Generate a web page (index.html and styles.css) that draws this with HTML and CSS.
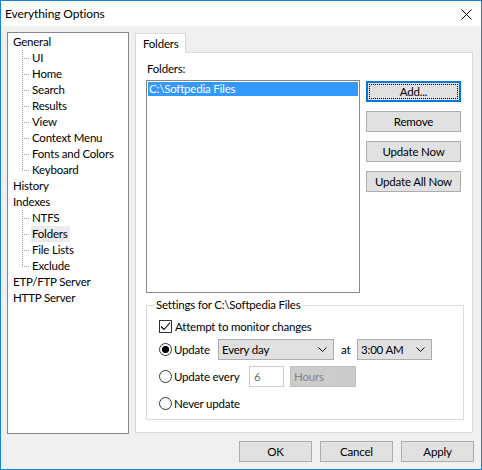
FILE: index.html
```html
<!DOCTYPE html>
<html>
<head>
<meta charset="utf-8">
<title>Everything Options</title>
<link rel="stylesheet" href="styles.css">
</head>
<body>
<div class="window">
  <div class="titlebar">
    <span class="title">Everything Options</span>
    <svg class="close" width="11" height="11" viewBox="0 0 11 11"><path d="M0.5 0.5 L10.5 10.5 M10.5 0.5 L0.5 10.5" stroke="#000" stroke-width="1" fill="none"/></svg>
  </div>
  <div class="client">
    <div class="main">
      <ul class="tree">
        <li class="node">General</li>
        <li class="node child">UI</li>
        <li class="node child">Home</li>
        <li class="node child">Search</li>
        <li class="node child">Results</li>
        <li class="node child">View</li>
        <li class="node child">Context Menu</li>
        <li class="node child">Fonts and Colors</li>
        <li class="node child last">Keyboard</li>
        <li class="node">History</li>
        <li class="node">Indexes</li>
        <li class="node child">NTFS</li>
        <li class="node child"><span class="selected">Folders</span></li>
        <li class="node child">File Lists</li>
        <li class="node child last">Exclude</li>
        <li class="node">ETP/FTP Server</li>
        <li class="node">HTTP Server</li>
      </ul>
      <div class="tabs">
        <div class="tabstrip"><div class="tab">Folders</div></div>
        <div class="panel">
          <div class="label">Folders:</div>
          <div class="listrow">
            <div class="listbox"><div class="item sel">C:\Softpedia Files</div></div>
            <div class="btncol">
              <div class="btn default">Add...</div>
              <div class="btn">Remove</div>
              <div class="btn">Update Now</div>
              <div class="btn">Update All Now</div>
            </div>
          </div>
          <fieldset class="group">
            <legend>Settings for C:\Softpedia Files</legend>
            <div class="groupbody">
              <div class="row r1">
                <span class="check"><svg width="11" height="11" viewBox="0 0 11 11"><path d="M1 5.5 L4 8.5 L10 1.5" stroke="#000" stroke-width="1.1" fill="none"/></svg></span>
                <span class="ctext">Attempt to monitor changes</span>
              </div>
              <div class="row r2">
                <span class="opt w-update"><span class="radio on"></span><span class="rtext">Update</span></span>
                <span class="combo c-freq"><span class="ctext2">Every day</span><svg class="chev" width="9" height="5" viewBox="0 0 9 5"><path d="M0.5 0.5 L4.5 4.5 L8.5 0.5" stroke="#000" fill="none"/></svg></span>
                <span class="at">at</span>
                <span class="combo c-time"><span class="ctext2">3:00 AM</span><svg class="chev" width="9" height="5" viewBox="0 0 9 5"><path d="M0.5 0.5 L4.5 4.5 L8.5 0.5" stroke="#000" fill="none"/></svg></span>
              </div>
              <div class="row r3">
                <span class="opt w-every"><span class="radio"></span><span class="rtext">Update every</span></span>
                <span class="edit">6</span>
                <span class="combo disabled c-hours"><span class="ctext2">Hours</span><svg class="chev" width="9" height="5" viewBox="0 0 9 5"><path d="M0.5 0.5 L4.5 4.5 L8.5 0.5" stroke="#bfbfbf" fill="none"/></svg></span>
              </div>
              <div class="row r4">
                <span class="opt"><span class="radio"></span><span class="rtext">Never update</span></span>
              </div>
            </div>
          </fieldset>
        </div>
      </div>
    </div>
    <div class="footer">
      <div class="btn fbtn">OK</div>
      <div class="btn fbtn">Cancel</div>
      <div class="btn fbtn">Apply</div>
    </div>
  </div>
</div>
</body>
</html>
```
FILE: styles.css
```css
html, body {
  margin: 0;
  padding: 0;
}
body {
  font-family: Lato, "Noto Sans", sans-serif;
  font-size: 11.5px;
  letter-spacing: -0.2px;
  color: #000;
  background: #f0f0f0;
}
.window {
  width: 482px;
  height: 470px;
  box-sizing: border-box;
  border: 1px solid #1883d7;
  background: #f0f0f0;
  display: flex;
  flex-direction: column;
}
.titlebar {
  height: 25px;
  background: #fff;
  display: flex;
  align-items: center;
  padding: 0 9px 0 3px;
  flex: none;
}
.title {
  font-size: 12px;
  letter-spacing: -0.1px;
  line-height: 16px;
  margin-left: 1px;
}
.close {
  margin-left: auto;
  margin-top: 2px;
}
.client {
  flex: 1;
  display: flex;
  flex-direction: column;
  padding: 6px 7px 0 6px;
}
.main {
  display: flex;
  height: 402px;
  flex: none;
}
.tree {
  width: 122px;
  height: 402px;
  box-sizing: border-box;
  border: 1px solid #828790;
  background: #fff;
  margin: 0;
  padding: 1px 0 0 5px;
  list-style: none;
}
.node {
  height: 16px;
  line-height: 16px;
  white-space: nowrap;
}
.child {
  padding-left: 19px;
  background-image:
    repeating-linear-gradient(to bottom, #a0a0a0 0 1px, transparent 1px 2px),
    repeating-linear-gradient(to right, #a0a0a0 0 1px, transparent 1px 2px);
  background-size: 1px 16px, 8px 1px;
  background-position: 9px 0, 9px 8px;
  background-repeat: no-repeat;
}
.child.last {
  background-size: 1px 9px, 8px 1px;
}
.selected {
  background: #ebebeb;
  padding: 0 3px 0 1px;
  margin-left: -1px;
  display: inline-block;
  line-height: 16px;
}
.tabs {
  margin-left: 6px;
  width: 338px;
  display: flex;
  flex-direction: column;
}
.tabstrip {
  margin-top: 1px;
  height: 19px;
  display: flex;
  flex: none;
}
.tab {
  position: relative;
  z-index: 1;
  width: 51px;
  height: 20px;
  box-sizing: border-box;
  border: 1px solid #d9d9d9;
  border-bottom: none;
  background: #fff;
  padding-left: 7px;
  line-height: 19px;
}
.panel {
  height: 381px;
  box-sizing: border-box;
  border: 1px solid #d9d9d9;
  background: #fff;
  padding: 8px 0 0 10px;
}
.label {
  height: 16px;
  line-height: 16px;
  padding-left: 1px;
}
.listrow {
  display: flex;
  margin-top: 3px;
}
.listbox {
  width: 214px;
  height: 213px;
  box-sizing: border-box;
  border: 1px solid #828790;
  padding: 1px;
  background: #fff;
}
.item {
  height: 14px;
  line-height: 14px;
  padding-left: 1px;
  white-space: nowrap;
}
.item.sel {
  background: #3399ff;
  color: #fff;
}
.btncol {
  margin-left: 6px;
  margin-top: 1px;
  display: flex;
  flex-direction: column;
  gap: 9px;
}
.btn {
  width: 95px;
  height: 21px;
  box-sizing: border-box;
  border: 1px solid #adadad;
  background: #e1e1e1;
  display: flex;
  align-items: center;
  justify-content: center;
  line-height: 16px;
}
.btn.default {
  border: 2px solid #0078d7;
  outline: 1px dotted #000;
  outline-offset: -4px;
}
.group {
  margin: 5px 8px 0 0;
  padding: 0;
  border: 1px solid #dcdcdc;
  min-width: 0;
  height: 122px;
  box-sizing: border-box;
}
.group legend {
  margin-left: 7px;
  padding: 0 2px;
  line-height: 14px;
}
.groupbody {
  padding: 6px 0 0 12px;
}
.row {
  display: flex;
  align-items: center;
}
.r1 { height: 16px; }
.r2 { height: 21px; margin-top: 5px; }
.r3 { height: 21px; margin-top: 6px; }
.r4 { height: 16px; margin-top: 8px; }
.check {
  width: 13px;
  height: 13px;
  box-sizing: border-box;
  border: 1px solid #333;
  background: #fff;
  display: flex;
  align-items: center;
  justify-content: center;
}
.ctext {
  margin-left: 3px;
}
.opt {
  display: flex;
  align-items: center;
}
.w-update { width: 59px; }
.w-every { width: 90px; }
.radio {
  width: 13px;
  height: 13px;
  box-sizing: border-box;
  border: 1px solid #333;
  border-radius: 50%;
  background: #fff;
  flex: none;
}
.radio.on {
  background: radial-gradient(circle, #000 0 3.3px, #fff 3.9px);
}
.rtext {
  margin-left: 2px;
}
.combo {
  height: 21px;
  box-sizing: border-box;
  border: 1px solid #adadad;
  background: #e1e1e1;
  display: flex;
  align-items: center;
  padding: 0 6px 0 3px;
}
.chev {
  margin-left: auto;
}
.c-freq { width: 116px; }
.c-time { width: 75px; }
.c-hours { width: 66px; margin-left: 6px; }
.combo.disabled {
  background: #cccccc;
  border-color: #bfbfbf;
  color: #838383;
}
.at {
  width: 16px;
  margin-left: 7px;
}
.edit {
  width: 35px;
  height: 21px;
  box-sizing: border-box;
  border: 1px solid #cccccc;
  background: #fff;
  color: #6d6d6d;
  padding-left: 4px;
  display: flex;
  align-items: center;
}
.footer {
  margin-top: 7px;
  display: flex;
  justify-content: flex-end;
  gap: 8px;
}
.fbtn {
  width: 73px;
}
```
